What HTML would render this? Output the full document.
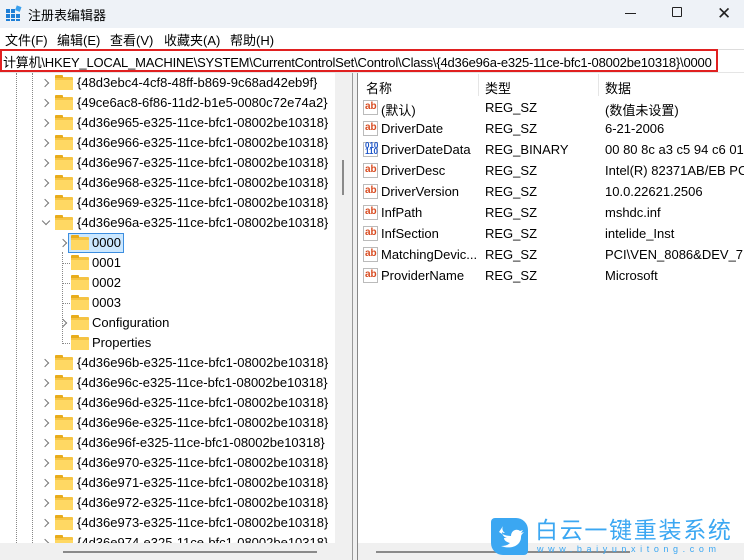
<!DOCTYPE html>
<html><head><meta charset="utf-8"><style>
*{margin:0;padding:0;box-sizing:border-box}
body{width:744px;height:560px;overflow:hidden;background:#fff;font-family:"Liberation Sans","Noto Sans CJK SC",sans-serif;font-size:13px;color:#000;position:relative}
.a{position:absolute;white-space:nowrap}
.fold{position:absolute;width:18px;height:13px;background:#f5c343;border-radius:1px}
.fold:before{content:"";position:absolute;left:0;top:-2px;width:8px;height:3px;background:#e8ac1c;border-radius:1px 1px 0 0}
.fold:after{content:"";position:absolute;left:0;top:3px;width:18px;height:10px;background:#ffd863}
.chev{position:absolute;width:6px;height:6px;border-right:1.3px solid #777;border-top:1.3px solid #777;transform:rotate(45deg)}
.ab{position:absolute;width:15px;height:15px;border:1px solid #bbb;background:#fff;font-size:10px;font-weight:bold;color:#d84b20;line-height:11px;text-align:left;padding-left:1px}
</style></head><body>
<div class="a" style="left:0;top:0;width:744px;height:28px;background:#eef2f7"></div>
<svg class="a" style="left:6px;top:5px" width="16" height="16"><g fill="#1f7fd6"><rect x="0" y="4" width="4" height="4"/><rect x="5" y="4" width="4" height="4"/><rect x="0" y="9" width="4" height="4"/><rect x="5" y="9" width="4" height="4"/><rect x="10" y="9" width="4" height="4"/><rect x="0" y="14" width="4" height="2"/><rect x="5" y="14" width="4" height="2"/><rect x="10" y="14" width="4" height="2"/></g><rect x="10" y="1" width="5" height="5" fill="#3aa0ee" transform="rotate(20 12 3)"/></svg>
<div class="a" style="left:28px;top:5px;font-size:13px">注册表编辑器</div>
<div class="a" style="left:625px;top:13px;width:11px;height:1px;background:#222"></div>
<div class="a" style="left:672px;top:7px;width:10px;height:10px;border:1px solid #222;border-radius:1px"></div>
<div class="a" style="left:717px;top:4px;font-size:17px;color:#222">✕</div>
<div class="a" style="left:0;top:28px;width:744px;height:20px;background:#fff"></div>
<div class="a" style="left:5px;top:30px">文件(F)</div>
<div class="a" style="left:57px;top:30px">编辑(E)</div>
<div class="a" style="left:110px;top:30px">查看(V)</div>
<div class="a" style="left:164px;top:30px">收藏夹(A)</div>
<div class="a" style="left:230px;top:30px">帮助(H)</div>
<div class="a" style="left:0;top:49px;width:744px;height:1px;background:#ddd"></div>
<div class="a" style="left:0;top:49px;width:718px;height:23px;border:2px solid #e02020"></div>
<div class="a" style="left:3px;top:52px;color:#000;letter-spacing:-0.2px">计算机\HKEY_LOCAL_MACHINE\SYSTEM\CurrentControlSet\Control\Class\{4d36e96a-e325-11ce-bfc1-08002be10318}\0000</div>
<div class="a" style="left:0;top:72px;width:744px;height:1px;background:#e5e5e5"></div>
<!-- tree -->
<div class="a" style="left:16px;top:73px;height:470px;border-left:1px dotted #888"></div>
<div class="a" style="left:32px;top:73px;height:470px;border-left:1px dotted #888"></div>
<div class="a" style="left:62px;top:252px;height:92px;border-left:1px dotted #888"></div>
<div class="a" style="left:68px;top:233px;width:56px;height:20px;background:#cce8ff;border:1px solid #3d8ee0"></div>
<div id="tree"></div>
<!-- v scrollbar -->
<div class="a" style="left:335px;top:73px;width:17px;height:470px;background:#f0f0f0"></div>
<div class="a" style="left:342px;top:160px;width:2px;height:35px;background:#8a8a8a"></div>
<div class="a" style="left:352px;top:73px;width:5px;height:487px;background:#f0f0f0"></div>
<div class="a" style="left:352px;top:73px;width:1px;height:487px;background:#999"></div>
<div class="a" style="left:357px;top:73px;width:1px;height:487px;background:#888"></div>
<div class="a" style="left:0;top:543px;width:352px;height:17px;background:#f0f0f0"></div>
<div class="a" style="left:63px;top:551px;width:254px;height:2px;background:#8a8a8a"></div>
<div class="a" style="left:358px;top:543px;width:386px;height:17px;background:#f0f0f0"></div>
<div class="a" style="left:376px;top:551px;width:254px;height:2px;background:#8a8a8a"></div>
<!-- right -->
<div class="a" style="left:366px;top:78px">名称</div>
<div class="a" style="left:478px;top:74px;width:1px;height:22px;background:#e5e5e5"></div>
<div class="a" style="left:485px;top:78px">类型</div>
<div class="a" style="left:598px;top:74px;width:1px;height:22px;background:#e5e5e5"></div>
<div class="a" style="left:605px;top:78px">数据</div>
<div id="vals"></div>
<!-- logo -->
<div class="a" style="left:491px;top:518px;width:37px;height:37px;background:#3ba7f2;border-radius:4px 12px 4px 12px"></div>
<svg class="a" style="left:494px;top:522px" width="32" height="30"><path d="M5 10c4 3 8 4 12 4 0-5 5-8 9-5l3-1-2 3 3-1c-2 2-3 3-3 5 0 8-9 13-20 9 4 0 7-1 9-3-4-1-6-3-6-5h3c-3-1-5-3-5-6 1 1 2 1 3 1-3-2-3-5-2-7z" fill="#fff"/></svg>
<div class="a" style="left:535px;top:514px;font-size:23px;color:#3ba7f2;letter-spacing:1.7px;font-family:'Noto Sans CJK SC',sans-serif;line-height:28px">白云一键重装系统</div>
<div class="a" style="left:537px;top:544px;font-size:9px;color:#3ba7f2;letter-spacing:4.6px">www.baiyunxitong.com</div>
<script>
var t=document.getElementById('tree'),h='';
var rows=[[1,'{48d3ebc4-4cf8-48ff-b869-9c68ad42eb9f}'],[1,'{49ce6ac8-6f86-11d2-b1e5-0080c72e74a2}'],[1,'{4d36e965-e325-11ce-bfc1-08002be10318}'],[1,'{4d36e966-e325-11ce-bfc1-08002be10318}'],[1,'{4d36e967-e325-11ce-bfc1-08002be10318}'],[1,'{4d36e968-e325-11ce-bfc1-08002be10318}'],[1,'{4d36e969-e325-11ce-bfc1-08002be10318}'],[2,'{4d36e96a-e325-11ce-bfc1-08002be10318}'],[3,'0000'],[4,'0001'],[4,'0002'],[4,'0003'],[3,'Configuration'],[4,'Properties'],[1,'{4d36e96b-e325-11ce-bfc1-08002be10318}'],[1,'{4d36e96c-e325-11ce-bfc1-08002be10318}'],[1,'{4d36e96d-e325-11ce-bfc1-08002be10318}'],[1,'{4d36e96e-e325-11ce-bfc1-08002be10318}'],[1,'{4d36e96f-e325-11ce-bfc1-08002be10318}'],[1,'{4d36e970-e325-11ce-bfc1-08002be10318}'],[1,'{4d36e971-e325-11ce-bfc1-08002be10318}'],[1,'{4d36e972-e325-11ce-bfc1-08002be10318}'],[1,'{4d36e973-e325-11ce-bfc1-08002be10318}'],[1,'{4d36e974-e325-11ce-bfc1-08002be10318}']];
rows.forEach(function(r,i){var y=73+i*20,k=r[0];
var cx=k<=2?42:60,fx=k<=2?55:71,tx=k<=2?77:92;
if(k==1||k==3)h+='<div class="chev" style="left:'+cx+'px;top:'+(y+7)+'px"></div>';
if(k==2)h+='<div class="chev" style="left:'+(cx+1)+'px;top:'+(y+5)+'px;transform:rotate(135deg)"></div>';
if(k==4)h+='<div class="a" style="left:63px;top:'+(y+10)+'px;width:7px;border-top:1px dotted #888"></div>';
h+='<div class="fold" style="left:'+fx+'px;top:'+(y+4)+'px"></div>';
h+='<div class="a" style="left:'+tx+'px;top:'+(y+2)+'px;height:16px;overflow:hidden">'+r[1]+'</div>';});
t.outerHTML=h;
var v=[['(默认)','REG_SZ','(数值未设置)'],['DriverDate','REG_SZ','6-21-2006'],['DriverDateData','REG_BINARY','00 80 8c a3 c5 94 c6 01'],['DriverDesc','REG_SZ','Intel(R) 82371AB/EB PCI'],['DriverVersion','REG_SZ','10.0.22621.2506'],['InfPath','REG_SZ','mshdc.inf'],['InfSection','REG_SZ','intelide_Inst'],['MatchingDevic...','REG_SZ','PCI\\VEN_8086&amp;DEV_711'],['ProviderName','REG_SZ','Microsoft']];
h='';v.forEach(function(r,i){var y=98+i*21;
if(r[1]=='REG_BINARY')h+='<div class="ab" style="left:363px;top:'+(y+2)+'px;color:#1d55c8;font-size:8px;line-height:6px">010<br>110</div>';
else h+='<div class="ab" style="left:363px;top:'+(y+2)+'px">ab</div>';
h+='<div class="a" style="left:381px;top:'+(y+2)+'px">'+r[0]+'</div><div class="a" style="left:485px;top:'+(y+2)+'px">'+r[1]+'</div><div class="a" style="left:605px;top:'+(y+2)+'px">'+r[2]+'</div>';});
document.getElementById('vals').outerHTML=h;
</script>
</body></html>
